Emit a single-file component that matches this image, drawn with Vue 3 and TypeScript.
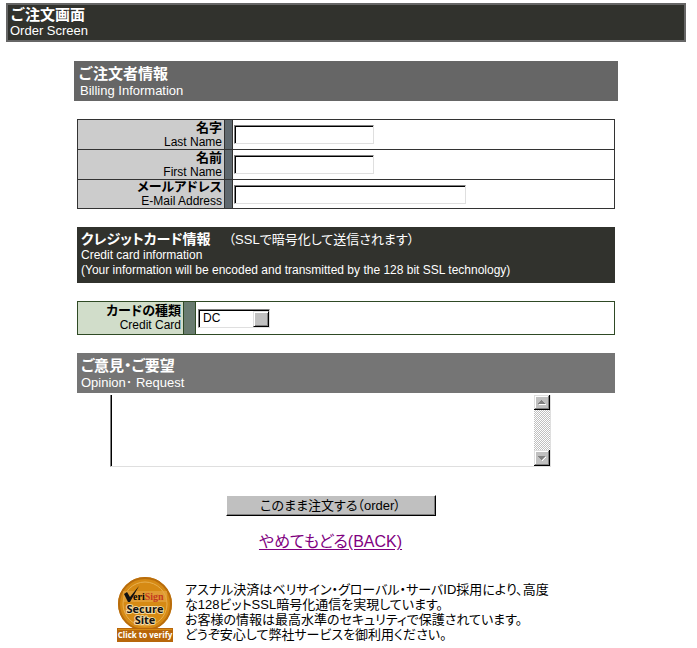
<script setup lang="ts">
import { ref } from 'vue'

interface Field {
  id: string
  ja: string
  en: string
  wide: boolean
}

const fields: Field[] = [
  { id: 'last-name', ja: '名字', en: 'Last Name', wide: false },
  { id: 'first-name', ja: '名前', en: 'First Name', wide: false },
  { id: 'email', ja: 'メールアドレス', en: 'E-Mail Address', wide: true },
]

const values = ref<Record<string, string>>({ 'last-name': '', 'first-name': '', email: '' })
const card = ref('DC')
const opinion = ref('')
</script>

<template>
  <main class="page">
    <header class="title">
      <h1>ご注文画面</h1>
      <p>Order Screen</p>
    </header>

    <form class="form" @submit.prevent>
      <div class="banner billing">
        <h2>ご注文者情報</h2>
        <p>Billing Information</p>
      </div>

      <table class="grid person">
        <tbody>
          <tr v-for="f in fields" :key="f.id">
            <th scope="row">
              <label :for="f.id"><b>{{ f.ja }}</b><span>{{ f.en }}</span></label>
            </th>
            <td class="bar"></td>
            <td class="cell">
              <input :id="f.id" v-model="values[f.id]" type="text" :class="{ wide: f.wide }" />
            </td>
          </tr>
        </tbody>
      </table>

      <div class="banner credit">
        <h2>クレジットカード情報<span class="note">（SSLで暗号化して送信されます）</span></h2>
        <p>Credit card information</p>
        <p>(Your information will be encoded and transmitted by the 128 bit SSL technology)</p>
      </div>

      <table class="grid card">
        <tbody>
          <tr>
            <th scope="row">
              <label for="card"><b>カードの種類</b><span>Credit Card</span></label>
            </th>
            <td class="bar"></td>
            <td class="cell">
              <div class="select">
                <select id="card" v-model="card">
                  <option>DC</option>
                </select>
                <span class="knob" aria-hidden="true"></span>
              </div>
            </td>
          </tr>
        </tbody>
      </table>

      <div class="banner opinion">
        <h2><label for="opinion">ご意見・ご要望</label></h2>
        <p>Opinion･ Request</p>
      </div>

      <div class="lower">
        <div class="memo">
          <textarea id="opinion" v-model="opinion"></textarea>
          <div class="scroll" aria-hidden="true">
            <svg class="arrow" width="16" height="15" viewBox="0 0 16 15" shape-rendering="crispEdges">
              <path d="M0 0H16V15H0z" fill="#000" />
              <path d="M0 0H15V14H0z" fill="#dfdfdf" />
              <path d="M1 1H15V14H1z" fill="#808080" />
              <path d="M1 1H14V13H1z" fill="#fff" />
              <path d="M2 2H14V13H2z" fill="#c0c0c0" />
              <path d="M5 9H12V10H5z" fill="#fff" />
              <path d="M7 5H8V6H9V7H10V8H11V9H4V8H5V7H6V6H7z" fill="#808080" />
            </svg>
            <span class="track"></span>
            <svg class="arrow" width="16" height="16" viewBox="0 0 16 16" shape-rendering="crispEdges">
              <path d="M0 0H16V16H0z" fill="#000" />
              <path d="M0 0H15V15H0z" fill="#dfdfdf" />
              <path d="M1 1H15V15H1z" fill="#808080" />
              <path d="M1 1H14V14H1z" fill="#fff" />
              <path d="M2 2H14V14H2z" fill="#c0c0c0" />
              <path d="M11 7H12V8H11V9H10V10H9V11H8V10H9V9H10V8H11z" fill="#fff" />
              <path d="M4 6H11V7H10V8H9V9H8V10H7V9H6V8H5V7H4z" fill="#808080" />
            </svg>
          </div>
        </div>
        <button type="submit">このまま注文する（order）</button>
        <a class="back" href="#">やめてもどる(BACK)</a>
      </div>
    </form>

    <footer class="secure">
      <svg class="seal" width="56" height="66" viewBox="0 0 56 66" role="img" aria-label="VeriSign Secure Site">
        <circle cx="28" cy="28" r="27" fill="#d68a14" />
        <circle cx="28" cy="28" r="26" fill="none" stroke="#b86c0c" stroke-width="2" />
        <circle cx="28" cy="28" r="22" fill="none" stroke="#e8b050" stroke-width="1" />
        <path d="M6 15H50V26H6z" fill="#e5a644" opacity=".65" />
        <path d="M7 18L10 16L13 21L22 10L13 26H11z" fill="#111" />
        <text x="16" y="24" class="veri">eri<tspan fill="#c43a20">Sign</tspan></text>
        <text x="28" y="37" text-anchor="middle" class="site">Secure</text>
        <text x="28" y="48" text-anchor="middle" class="site">Site</text>
        <path d="M0 52H56V66H0z" fill="#b8660a" />
        <path d="M1 53H55V54H1z" fill="#d68a14" />
        <text x="28" y="62" text-anchor="middle" class="verify">Click to verify</text>
      </svg>
      <p>
        アスナル決済はベリサイン・グローバル・サーバID採用により、高度<br />な128ビットSSL暗号化通信を実現しています。<br />お客様の情報は最高水準のセキュリティで保護されています。<br />どうぞ安心して弊社サービスを御利用ください。
      </p>
    </footer>
  </main>
</template>

<style>
body {
  margin: 0;
  background: #fff;
}
</style>

<style scoped>
.page {
  padding: 3px 11px 6px 6px;
  font-family: 'Liberation Sans', 'Noto Sans CJK JP', sans-serif;
  font-size: 12px;
  line-height: 14px;
  color: #000;
}
h1,
h2,
p {
  margin: 0;
}
h1,
h2 {
  font-size: 15px;
  line-height: 18px;
  font-weight: 700;
}
.title {
  box-sizing: border-box;
  border: 2px solid #666;
  background: #31322d;
  color: #fff;
  padding: 1px 2px 2px;
}
.title p,
.billing p,
.opinion p {
  font-size: 13px;
}
.form {
  width: 80%;
  margin: 19px auto 0;
}
.banner {
  color: #fff;
  margin: 0 3px;
}
.banner p {
  line-height: 15px;
}
.billing {
  margin: 0;
  background: #666;
  padding: 4px 4px 3px;
}
.billing p {
  padding-left: 2px;
}
.credit {
  background: #31322d;
  padding: 4px 4px 5px;
  font-feature-settings: 'palt';
}
.credit h2 {
  font-size: 14px;
  line-height: 17px;
}
.note {
  font-size: 13px;
  line-height: 15px;
  font-weight: 400;
  margin-left: 18px;
}
.opinion {
  background: #757575;
  padding: 4px 4px 3px;
  font-feature-settings: 'palt';
}
.grid {
  width: calc(100% - 6px);
  margin: 18px 3px;
  border-collapse: collapse;
  table-layout: fixed;
}
.grid th,
.grid td {
  border: 1px solid #333;
  padding: 0;
}
.grid th {
  width: 146px;
  background: #ccc;
  text-align: right;
  font-weight: 400;
}
.grid label b,
.grid label span {
  display: block;
  padding-right: 2px;
}
.grid label b {
  font-size: 13px;
  line-height: 14px;
  font-feature-settings: 'palt';
}
.grid .bar {
  width: 7px;
  background: #5f686e;
}
.grid .cell {
  padding-left: 1px;
}
.grid tr {
  height: 30px;
}
.grid tr:last-child {
  height: 29px;
}
.grid.card th,
.grid.card td {
  border-color: #2f4a25;
}
.grid.card th {
  width: 105px;
  background: #d1ddca;
}
.grid.card .bar {
  width: 11px;
  background: #697b70;
}
.grid.card .cell {
  padding-left: 2px;
}
.grid.card tr {
  height: 33px;
}
input,
select,
textarea,
button {
  box-sizing: border-box;
  margin: 0;
  border-radius: 0;
  font: inherit;
  color: #000;
}
input {
  display: block;
  width: 140px;
  height: 19px;
  padding: 1px 2px;
  border: 1px solid;
  border-color: #808080 #dfdfdf #dfdfdf #808080;
  box-shadow: inset 1px 1px 0 #000;
  background: #fff;
  outline: none;
}
input.wide {
  width: 232px;
}
.select {
  position: relative;
  width: 72px;
}
select {
  display: block;
  width: 100%;
  height: 19px;
  padding: 0 4px;
  appearance: none;
  border: 1px solid;
  border-color: #808080 #dfdfdf #dfdfdf #808080;
  box-shadow: inset 1px 1px 0 #000;
  background: #fff;
}
.knob {
  position: absolute;
  top: 2px;
  right: 1px;
  box-sizing: border-box;
  width: 16px;
  height: 16px;
  border: 1px solid;
  border-color: #dfdfdf #000 #000 #dfdfdf;
  box-shadow: inset 1px 1px 0 #fff, inset -1px -1px 0 #808080;
  background: #c0c0c0;
  pointer-events: none;
}
.lower {
  display: flex;
  flex-direction: column;
  align-items: center;
  padding-right: 31px;
}
.memo {
  display: flex;
  box-sizing: border-box;
  width: 441px;
  height: 72px;
  margin-top: 2px;
  border: solid;
  border-width: 0 1px 1px;
  border-color: #dfdfdf #dfdfdf #dfdfdf #808080;
}
textarea {
  flex: 1;
  padding: 2px;
  border: 0;
  border-left: 1px solid #000;
  background: #fff;
  resize: none;
  outline: none;
  overflow: hidden;
}
.scroll {
  display: flex;
  flex-direction: column;
}
.arrow {
  display: block;
}
.track {
  flex: 1;
  background: repeating-conic-gradient(#c0c0c0 0 25%, #fff 0 50%) 0 0 / 2px 2px;
}
button {
  width: 210px;
  height: 21px;
  margin-top: 28px;
  padding: 0;
  border: 1px solid;
  border-color: #fff #000 #000 #fff;
  box-shadow: inset -1px -1px 0 #808080;
  background: #c0c0c0;
  font-size: 13px;
  line-height: 18px;
  font-feature-settings: 'palt';
}
.back {
  margin-top: 15px;
  font-size: 16px;
  line-height: 22px;
  color: #800080;
  text-underline-offset: 2px;
  font-feature-settings: 'palt';
}
.secure {
  display: flex;
  width: 458px;
  margin: 23px auto 0;
  gap: 12px;
}
.secure p {
  padding-top: 6px;
  font-size: 13px;
  line-height: 15px;
  white-space: nowrap;
  font-feature-settings: 'palt';
}
.seal {
  flex: none;
  font-family: 'Open Sans', 'Liberation Sans', sans-serif;
  font-weight: 700;
}
.veri {
  font-family: 'Liberation Serif', serif;
  font-size: 10px;
}
.site {
  font-size: 11px;
  fill: #111;
  stroke: #f4d9a0;
  stroke-width: 2px;
  paint-order: stroke;
}
.verify {
  font-size: 8px;
  fill: #fff;
}
</style>
